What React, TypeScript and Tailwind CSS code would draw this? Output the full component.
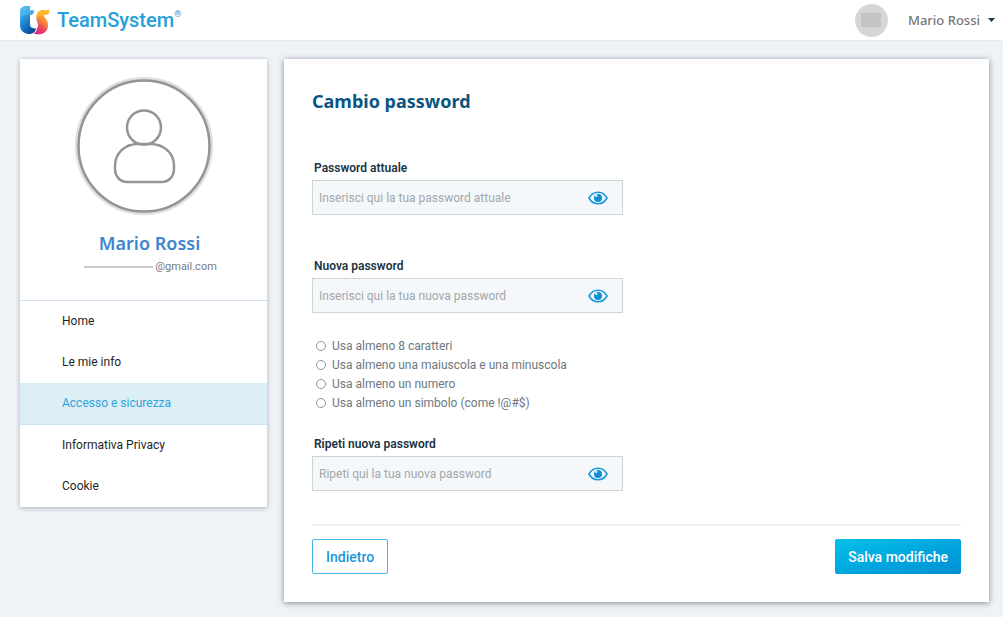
import { useState } from "react";

const menuItems = [
  { label: "Home", href: "#home" },
  { label: "Le mie info", href: "#info" },
  { label: "Accesso e sicurezza", href: "#sicurezza", active: true },
  { label: "Informativa Privacy", href: "#privacy" },
  { label: "Cookie", href: "#cookie" },
];

const requisiti = [
  "Usa almeno 8 caratteri",
  "Usa almeno una maiuscola e una minuscola",
  "Usa almeno un numero",
  "Usa almeno un simbolo (come !@#$)",
];

function Logo() {
  return (
    <svg width="30" height="29" viewBox="0 0 30 29" aria-hidden="true">
      <defs>
        <linearGradient id="logoBlue" x1="0.1" y1="0" x2="0.7" y2="1">
          <stop offset="0" stopColor="#5cc0f0" />
          <stop offset="0.35" stopColor="#2f9be0" />
          <stop offset="0.65" stopColor="#1573c2" />
          <stop offset="1" stopColor="#0b4596" />
        </linearGradient>
        <linearGradient id="logoWarm" x1="0.8" y1="0" x2="0.3" y2="1">
          <stop offset="0" stopColor="#fdc52b" />
          <stop offset="0.45" stopColor="#f68a3a" />
          <stop offset="0.75" stopColor="#ec3d63" />
          <stop offset="1" stopColor="#d12f83" />
        </linearGradient>
      </defs>
      <path
        d="M0 6C0 2 3 0 6 0h4v4.500h4C14 7.500 12 9 10 9v9c0 2.500 1 4 3.500 4.300L16 22.500C15.500 26.500 12 28 9 28 4 28 0 24.500 0 19z"
        fill="url(#logoBlue)"
      />
      <path d="M0 6C0 2 3 0 6 0h4v4.500h4C14 7.500 12 9 10 9 6 8 2 9.500 0 13z" fill="#55bbee" fillOpacity="0.6" />
      <path
        d="M29.500 4c0 3-1.500 5-4.500 5-1 0-1.500.7-1 1.500l2 2.500c1.500 2 2 4 2 6 0 6-4 9.500-10 9.500-2 0-3.500-.5-4.500-1.200 2.500-.8 3.500-2.800 3.500-5.300 1.500-1 1.500-3 .8-4.500C16.500 15 16.500 13 16.500 11c0-4.500 2.500-7 7-7z"
        fill="url(#logoWarm)"
      />
      <path d="M29.500 4c0 3-1.500 5-4.500 5-3 0-6 .5-8.400 3C16 7 19 4 23.500 4z" fill="#fdbb30" fillOpacity="0.8" />
    </svg>
  );
}

function EyeIcon() {
  return (
    <svg width="20" height="14" viewBox="0 0 20 14" fill="none" aria-hidden="true">
      <path
        d="M1 7c2-3.700 5.300-5.800 9-5.800S17 3.300 19 7c-2 3.700-5.300 5.800-9 5.800S3 10.700 1 7z"
        stroke="#1a97db"
        strokeWidth="1.600"
      />
      <circle cx="10" cy="7" r="4" fill="#0d8fd8" />
      <circle cx="8.200" cy="4.800" r="1.200" fill="#f4f8fb" />
    </svg>
  );
}

function CampoPassword({ id, label, placeholder }: { id: string; label: string; placeholder: string }) {
  const [visible, setVisible] = useState(false);

  return (
    <div className="flex w-full max-w-[311px] flex-col gap-0.5">
      <label htmlFor={id} className="px-0.5 text-xs leading-5 font-semibold text-[#203442]">
        {label}
      </label>
      <div className="flex h-[35px] items-center border border-[#cdd5d9] bg-[#f4f8fb] pr-3.5 pl-1.5">
        <input
          id={id}
          type={visible ? "text" : "password"}
          placeholder={placeholder}
          className="min-w-0 flex-1 bg-transparent text-xs text-[#444] outline-none placeholder:text-[#a3a7a9]"
        />
        <button type="button" aria-label="Mostra password" onClick={() => setVisible(!visible)}>
          <EyeIcon />
        </button>
      </div>
    </div>
  );
}

export default function App() {
  return (
    <div className="min-h-screen bg-[#eff3f7] pb-4 font-['Roboto',sans-serif]">
      <header className="flex h-[41px] items-center justify-between border-b border-[#e8ebee] bg-white pr-2 pl-5">
        <a href="#home" className="flex items-center gap-[7px] text-[#26a0da]">
          <Logo />
          <span className="flex text-xl leading-7 font-medium">
            TeamSystem<sup className="top-0 text-[9px] leading-4">®</sup>
          </span>
        </a>
        <div className="flex items-center gap-5">
          <span className="flex size-[33px] items-center justify-center rounded-full bg-[#d6d6d6]">
            <span className="h-3.5 w-5 bg-[#c4c4c4]" />
          </span>
          <button type="button" className="flex items-center gap-2 font-['Noto_Sans',sans-serif] text-[13px] leading-5 font-medium text-[#777]">
            Mario Rossi
            <svg width="7" height="4" viewBox="0 0 7 4" aria-hidden="true">
              <path d="M0 0h7L3.500 4z" fill="#17384d" />
            </svg>
          </button>
        </div>
      </header>

      <div className="flex items-start gap-[17px] pt-[18px] pr-3.5 pl-5">
        <aside className="w-[247px] shrink-0 bg-white shadow-[0_1px_5px_rgba(60,80,100,0.4)]">
          <div className="flex h-[242px] flex-col items-center border-b border-[#d3e2f0] pt-[18px]">
            <svg width="138" height="138" viewBox="0 0 138 138" fill="none" stroke="#949494" aria-hidden="true">
              <circle cx="69" cy="69" r="67" stroke="#dedede" strokeWidth="4" />
              <circle cx="69" cy="69" r="65.500" strokeWidth="2.500" />
              <circle cx="69" cy="50.500" r="17" strokeWidth="2.500" />
              <path
                d="M63 67h12c14 0 24 9 24 22v3c0 7-5 13-12 13H52c-7 0-12-6-12-13v-3c0-13 10-22 23-22z"
                strokeWidth="2.500"
              />
            </svg>
            <h2 className="mt-3.5 pl-3 font-['Noto_Sans',sans-serif] text-lg leading-7 font-semibold text-[#3d85cc]">Mario Rossi</h2>
            <p className="flex items-center gap-0.5 pl-3.5 text-[11px] leading-5 text-[#777c82]">
              <span className="h-0.5 w-[69px] bg-[#c9c9c9]" />
              @gmail.com
            </p>
          </div>
          <nav>
            {menuItems.map((item) => (
              <a
                key={item.label}
                href={item.href}
                className={
                  item.active
                    ? "flex h-[42px] items-center border-b border-[#cbe3ee] bg-[#dceef6] pb-0.5 pl-[42px] text-xs text-[#31a3dc]"
                    : "flex h-[41px] items-center pb-0.5 pl-[42px] text-xs text-[#1f1f1f]"
                }
              >
                {item.label}
              </a>
            ))}
          </nav>
        </aside>

        <main className="min-w-0 flex-1 bg-white p-7 shadow-[0_1px_6px_rgba(50,65,80,0.6)]">
          <h1 className="font-['Noto_Sans',sans-serif] text-lg leading-7 font-bold text-[#0a5580]">Cambio password</h1>
          <form onSubmit={(e) => e.preventDefault()}>
            <div className="mt-[43px]">
              <CampoPassword id="password_attuale" label="Password attuale" placeholder="Inserisci qui la tua password attuale" />
            </div>
            <div className="mt-[41px]">
              <CampoPassword id="nuova_password" label="Nuova password" placeholder="Inserisci qui la tua nuova password" />
            </div>
            <ul className="mt-[23px] mb-[22px]">
              {requisiti.map((testo, i) => (
                <li key={testo} className="flex h-[19px] items-center gap-1.5 pl-1">
                  <input
                    id={`requisito_${i}`}
                    type="radio"
                    name={`requisito_${i}`}
                    className="size-2.5 appearance-none rounded-full border border-[#8b959d] checked:bg-[#1a97db]"
                  />
                  <label htmlFor={`requisito_${i}`} className="text-xs text-[#6d7880]">
                    {testo}
                  </label>
                </li>
              ))}
            </ul>
            <CampoPassword id="ripeti_password" label="Ripeti nuova password" placeholder="Ripeti qui la tua nuova password" />
            <div className="mt-[33px] flex items-center justify-between border-t-2 border-[#f0f0f0] pt-[13px]">
              <button
                type="button"
                className="h-[35px] rounded-xs border border-[#4bb3e3] px-[13px] text-sm font-medium text-[#1a97db]"
              >
                Indietro
              </button>
              <button
                type="submit"
                className="h-[35px] rounded-xs bg-linear-to-br from-[#04c0ea] to-[#028fd4] px-[13px] text-sm font-medium text-white"
              >
                Salva modifiche
              </button>
            </div>
          </form>
        </main>
      </div>
    </div>
  );
}
